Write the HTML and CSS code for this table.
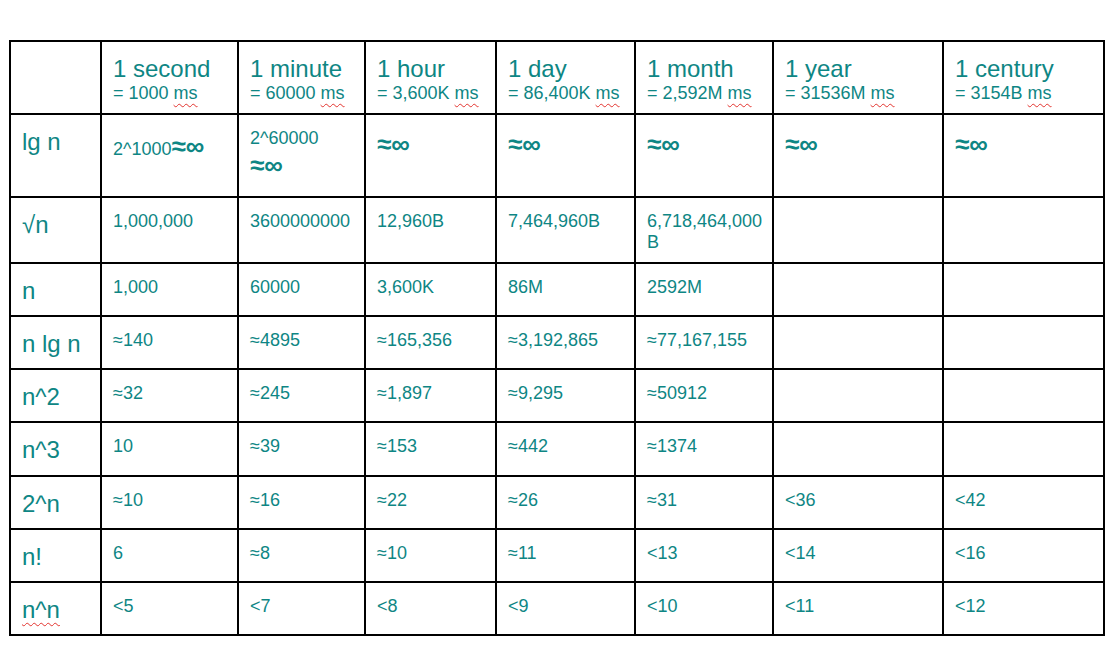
FILE: index.html
```html
<!DOCTYPE html>
<html lang="en">
<head>
<meta charset="utf-8">
<title>Growth of functions</title>
<link rel="stylesheet" href="styles.css">
</head>
<body>
<table class="grid">
  <colgroup>
    <col class="c0"><col class="c1"><col class="c2"><col class="c3"><col class="c4"><col class="c5"><col class="c6"><col class="c7">
  </colgroup>
  <tr class="r-head">
    <td></td>
    <td><span class="big">1 second</span><br>= 1000 <span class="typo">ms</span></td>
    <td><span class="big">1 minute</span><br>= 60000 <span class="typo">ms</span></td>
    <td><span class="big">1 hour</span><br>= 3,600K <span class="typo">ms</span></td>
    <td><span class="big">1 day</span><br>= 86,400K <span class="typo">ms</span></td>
    <td><span class="big">1 month</span><br>= 2,592M <span class="typo">ms</span></td>
    <td><span class="big">1 year</span><br>= 31536M <span class="typo">ms</span></td>
    <td><span class="big">1 century</span><br>= 3154B <span class="typo">ms</span></td>
  </tr>
  <tr class="r-lg">
    <td class="label">lg n</td>
    <td class="low">2^1000<span class="inf">≈∞</span></td>
    <td>2^60000<br><span class="inf">≈∞</span></td>
    <td><span class="inf">≈∞</span></td>
    <td><span class="inf">≈∞</span></td>
    <td><span class="inf">≈∞</span></td>
    <td><span class="inf">≈∞</span></td>
    <td><span class="inf">≈∞</span></td>
  </tr>
  <tr class="r-sqrt">
    <td class="label">√n</td>
    <td>1,000,000</td><td>3600000000</td><td>12,960B</td><td>7,464,960B</td><td>6,718,464,000 B</td><td></td><td></td>
  </tr>
  <tr class="r-std">
    <td class="label">n</td>
    <td>1,000</td><td>60000</td><td>3,600K</td><td>86M</td><td>2592M</td><td></td><td></td>
  </tr>
  <tr class="r-std">
    <td class="label">n lg n</td>
    <td>≈140</td><td>≈4895</td><td>≈165,356</td><td>≈3,192,865</td><td>≈77,167,155</td><td></td><td></td>
  </tr>
  <tr class="r-std">
    <td class="label">n^2</td>
    <td>≈32</td><td>≈245</td><td>≈1,897</td><td>≈9,295</td><td>≈50912</td><td></td><td></td>
  </tr>
  <tr class="r-tall">
    <td class="label">n^3</td>
    <td>10</td><td>≈39</td><td>≈153</td><td>≈442</td><td>≈1374</td><td></td><td></td>
  </tr>
  <tr class="r-std">
    <td class="label">2^n</td>
    <td>≈10</td><td>≈16</td><td>≈22</td><td>≈26</td><td>≈31</td><td>&lt;36</td><td>&lt;42</td>
  </tr>
  <tr class="r-std">
    <td class="label">n!</td>
    <td>6</td><td>≈8</td><td>≈10</td><td>≈11</td><td>&lt;13</td><td>&lt;14</td><td>&lt;16</td>
  </tr>
  <tr class="r-std">
    <td class="label"><span class="typo">n^n</span></td>
    <td>&lt;5</td><td>&lt;7</td><td>&lt;8</td><td>&lt;9</td><td>&lt;10</td><td>&lt;11</td><td>&lt;12</td>
  </tr>
</table>
</body>
</html>
```

FILE: styles.css
```css
html, body {
  margin: 0;
  padding: 0;
  background: #ffffff;
}

body {
  font-family: "Liberation Sans", Arial, sans-serif;
  color: #0e8684;
}

.grid {
  margin: 40px 0 0 9px;
  border-collapse: separate;
  border-spacing: 0;
  table-layout: fixed;
  width: 1096px;
  border-top: 2px solid #000;
  border-left: 2px solid #000;
}

.c0 { width: 91px; }
.c1 { width: 137px; }
.c2 { width: 127px; }
.c3 { width: 131px; }
.c4 { width: 139px; }
.c5 { width: 138px; }
.c6 { width: 170px; }
.c7 { width: 161px; }

.grid td {
  border-right: 2px solid #000;
  border-bottom: 2px solid #000;
  padding: 13px 3px 0 11px;
  vertical-align: top;
  font-size: 18px;
  line-height: normal;
  overflow: hidden;
}

.r-head { height: 73px; }
.r-lg { height: 83px; }
.r-sqrt { height: 66px; }
.r-std { height: 53px; }
.r-tall { height: 54px; }

.r-head td {
  padding-top: 13px;
}

.big {
  font-size: 24px;
}

.grid td.label {
  font-size: 24px;
}

.inf {
  font-size: 26px;
  font-weight: bold;
  line-height: 1.3;
}

.grid td.low {
  padding-top: 15px;
}

.typo {
  text-decoration: underline wavy #e3342f;
  text-decoration-thickness: 1px;
  text-decoration-skip-ink: none;
  text-underline-offset: 4px;
}
```
